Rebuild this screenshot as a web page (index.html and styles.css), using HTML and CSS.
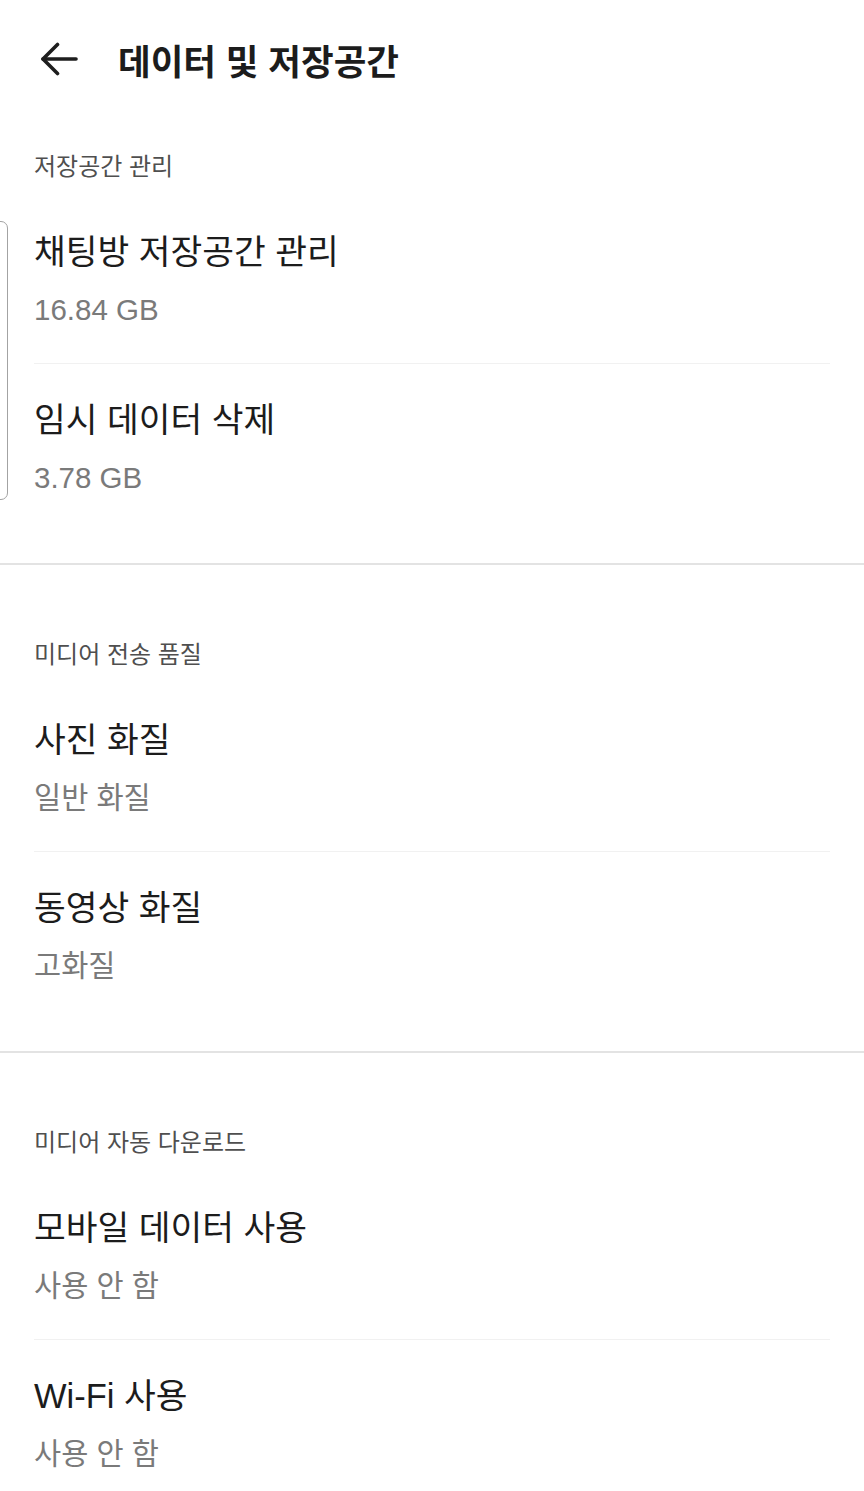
FILE: index.html
```html
<!DOCTYPE html>
<html lang="ko">
<head>
  <meta charset="UTF-8">
  <meta name="viewport" content="width=device-width, initial-scale=1.0">
  <title>데이터 및 저장공간</title>
  <link rel="stylesheet" href="styles.css">
</head>
<body>
  <div class="header">
    <a href="#" class="back">
      <svg width="38" height="34" viewBox="0 0 38 34" fill="none" stroke="#1e1e1e" stroke-width="3.6" stroke-linecap="round" stroke-linejoin="round">
        <path d="M3 17H36"/>
        <path d="M17.5 2.5L3 17L17.5 31.5"/>
      </svg>
    </a>
    <h1>데이터 및 저장공간</h1>
  </div>

  <div class="section">
    <div class="section-label">저장공간 관리</div>
    <div class="list">
      <div class="focus-ring"></div>
      <div class="item">
        <div class="item-title">채팅방 저장공간 관리</div>
        <div class="item-sub">16.84 GB</div>
      </div>
      <div class="item">
        <div class="item-title">임시 데이터 삭제</div>
        <div class="item-sub">3.78 GB</div>
      </div>
    </div>
  </div>

  <div class="section">
    <div class="section-label">미디어 전송 품질</div>
    <div class="list">
      <div class="item">
        <div class="item-title">사진 화질</div>
        <div class="item-sub">일반 화질</div>
      </div>
      <div class="item">
        <div class="item-title">동영상 화질</div>
        <div class="item-sub">고화질</div>
      </div>
    </div>
  </div>

  <div class="section">
    <div class="section-label">미디어 자동 다운로드</div>
    <div class="list">
      <div class="item">
        <div class="item-title">모바일 데이터 사용</div>
        <div class="item-sub">사용 안 함</div>
      </div>
      <div class="item">
        <div class="item-title">Wi-Fi 사용</div>
        <div class="item-sub">사용 안 함</div>
      </div>
    </div>
  </div>
</body>
</html>
```

FILE: styles.css
```css
:root {
  --text-color: #1c1c1c;
  --label-color: #4f4f4f;
  --sub-color: #7a7a7a;
  --line-color: #f1f1f1;
  --section-line: #e3e3e3;
  --white: #FFFFFF;
}

body {
  font-family: 'Liberation Sans', 'Noto Sans CJK KR', sans-serif;
  margin: 0;
  padding: 0;
  background-color: var(--white);
  color: var(--text-color);
  overflow-x: hidden;
}

.header {
  height: 118px;
  display: flex;
  align-items: center;
  gap: 40px;
  padding-left: 40px;
}

.back {
  display: flex;
  width: 38px;
  height: 34px;
}

.header h1 {
  margin: 0;
  font-size: 35.5px;
  font-weight: bold;
  color: var(--text-color);
}

.section {
  padding: 32px 34px 32px;
}

.section + .section {
  border-top: 2px solid var(--section-line);
  padding-top: 73px;
}

.section-label {
  font-size: 24px;
  line-height: 34px;
  color: var(--label-color);
  margin-bottom: 12px;
}

.list {
  position: relative;
}

.item {
  padding: 34px 0 33px;
  border-bottom: 1px solid var(--line-color);
}

.item:last-child {
  border-bottom: none;
}

.item-title {
  font-size: 34.5px;
  line-height: 44px;
  color: var(--text-color);
}

.item-sub {
  margin-top: 16px;
  font-size: 29.5px;
  line-height: 40px;
  color: var(--sub-color);
}

/* leftover focus outline peeking in from the left edge */
.focus-ring {
  position: absolute;
  top: 25px;
  bottom: 31px;
  left: -48px;
  width: 20px;
  border: 1.5px solid #a3a3a3;
  border-radius: 7px;
}
```
